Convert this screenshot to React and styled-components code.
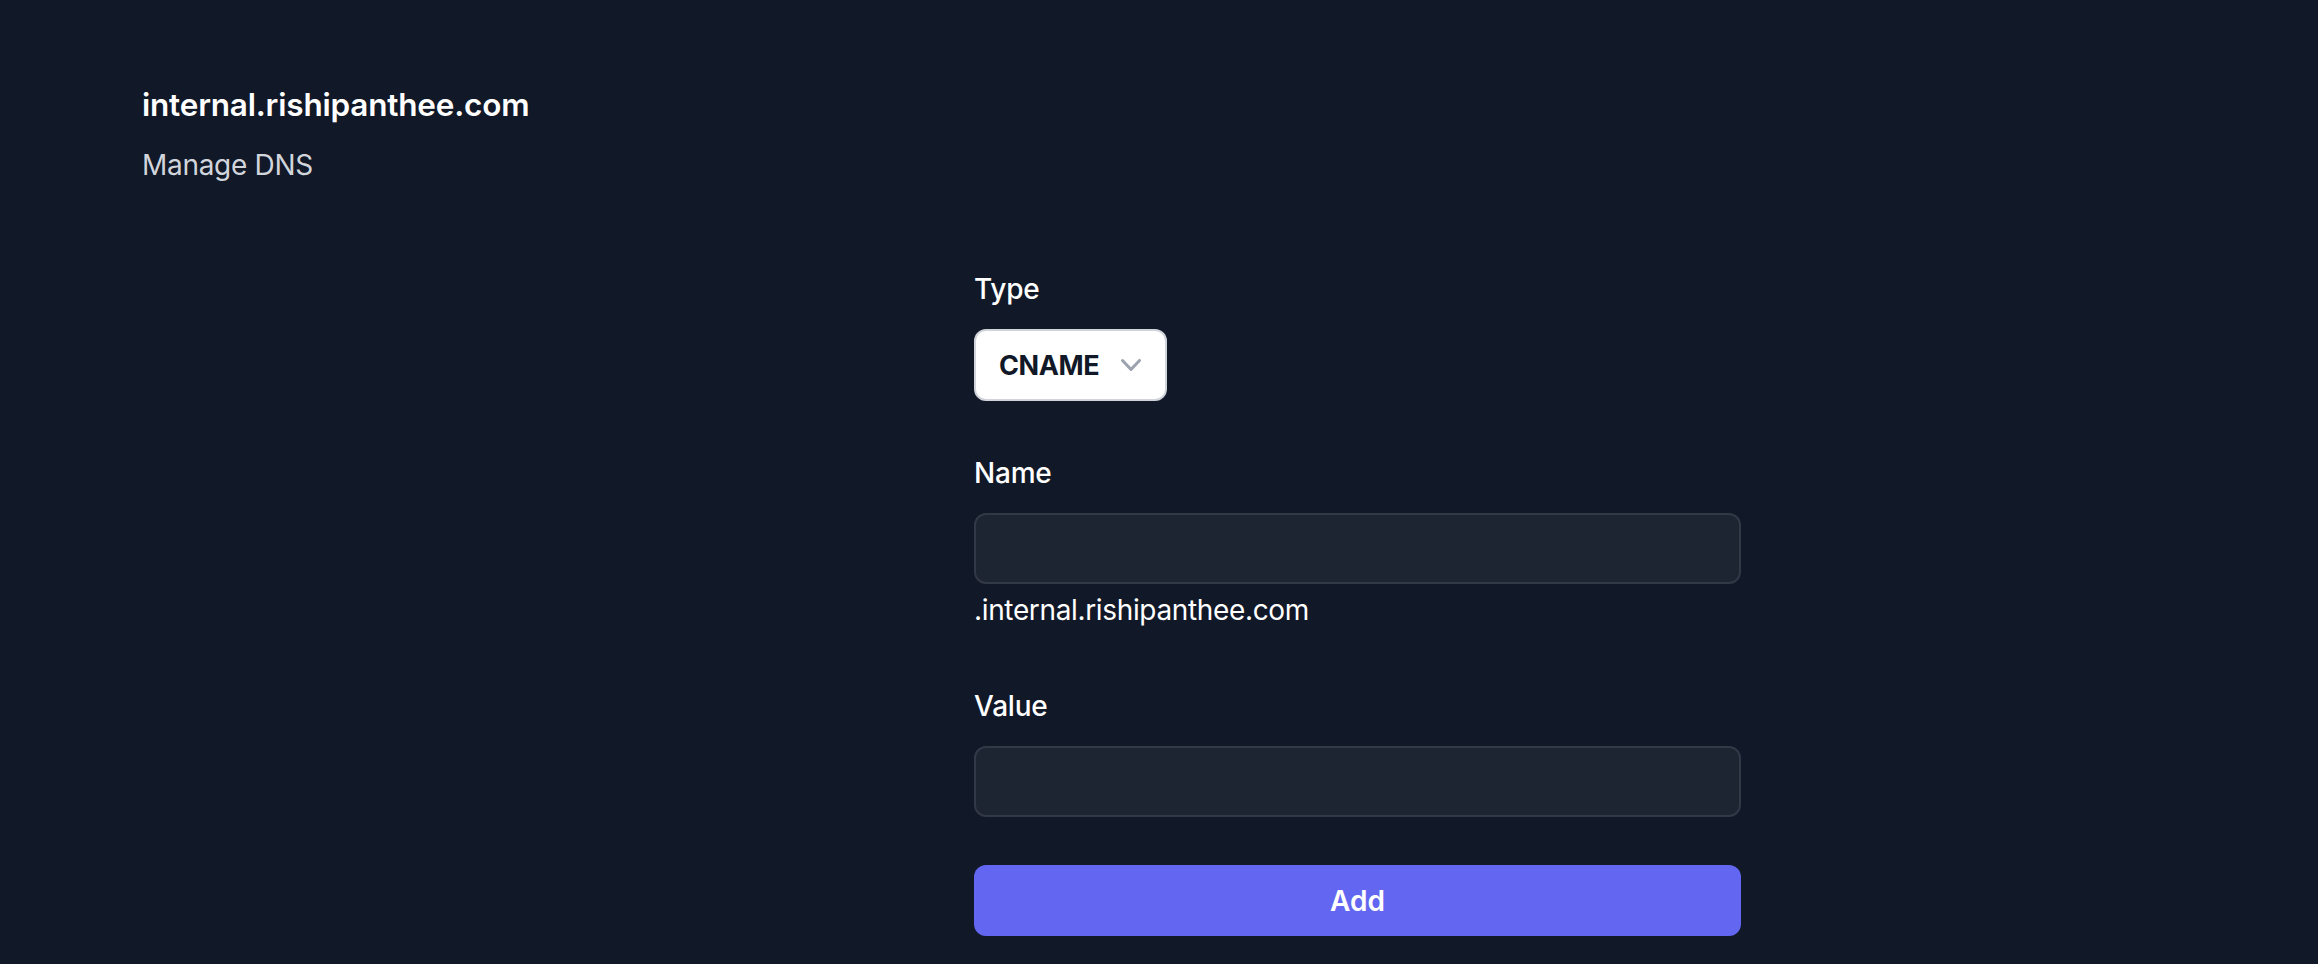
import styled, { createGlobalStyle } from 'styled-components';

const GlobalStyle = createGlobalStyle`
    html, body {
        margin: 0;
        padding: 0;
        background: #111827;
    }
    body {
        font-family: Inter, "Noto Sans", "Liberation Sans", sans-serif;
        color: #ffffff;
    }
`;

const Page = styled.div`
    min-height: 964px;
    box-sizing: border-box;
    padding: 77px 142px 0 142px;
    background: #111827;
`;

const Header = styled.header`
    display: flex;
    flex-direction: column;
    gap: 12px;
`;

const Title = styled.h1`
    margin: 0;
    font-size: 31.5px;
    line-height: 56px;
    font-weight: 600;
    letter-spacing: -0.2px;
    color: #ffffff;
`;

const Subtitle = styled.p`
    margin: 0;
    font-size: 28px;
    line-height: 40px;
    letter-spacing: -0.3px;
    color: #d1d5db;
`;

const Form = styled.form`
    display: flex;
    flex-direction: column;
    gap: 48px;
    width: 767px;
    margin: 80px 0 0 832px;
`;

const Field = styled.div`
    display: flex;
    flex-direction: column;
    align-items: flex-start;
`;

const Label = styled.label`
    font-size: 28px;
    line-height: 48px;
    font-weight: 500;
    letter-spacing: -0.2px;
    color: #ffffff;
    margin-bottom: 16px;
`;

const SelectBox = styled.div`
    display: flex;
    align-items: center;
    justify-content: space-between;
    box-sizing: border-box;
    width: 193px;
    height: 72px;
    padding: 0 14px 0 23px;
    background: #ffffff;
    border: 2px solid #d1d5db;
    border-radius: 12px;
    font-size: 27px;
    font-weight: 700;
    letter-spacing: -0.4px;
    color: #111827;
`;

const TextInput = styled.input`
    box-sizing: border-box;
    width: 100%;
    height: 71px;
    padding: 0 24px;
    background: #1d2432;
    border: 2px solid #323846;
    border-radius: 12px;
    font: inherit;
    font-size: 28px;
    color: #ffffff;
    outline: none;
`;

const Suffix = styled.span`
    font-size: 28px;
    line-height: 48px;
    letter-spacing: -0.35px;
    color: #ffffff;
    margin-top: 2px;
`;

const SubmitButton = styled.button`
    width: 100%;
    height: 71px;
    border: none;
    border-radius: 12px;
    background: #6366f1;
    color: #ffffff;
    font: inherit;
    font-size: 28px;
    font-weight: 600;
    cursor: pointer;
`;

function ChevronDown() {
    return (
        <svg width="40" height="40" viewBox="0 0 20 20" fill="#9ca3af" aria-hidden="true">
            <path
                fillRule="evenodd"
                d="M5.23 7.21a.75.75 0 011.06.02L10 11.168l3.71-3.938a.75.75 0 111.08 1.04l-4.25 4.5a.75.75 0 01-1.08 0l-4.25-4.5a.75.75 0 01.02-1.06z"
                clipRule="evenodd"
            />
        </svg>
    );
}

export default function App() {
    return (
        <>
            <GlobalStyle />
            <Page>
                <Header>
                    <Title>internal.rishipanthee.com</Title>
                    <Subtitle>Manage DNS</Subtitle>
                </Header>

                <Form onSubmit={(e) => e.preventDefault()}>
                    <Field>
                        <Label>Type</Label>
                        <SelectBox>
                            CNAME
                            <ChevronDown />
                        </SelectBox>
                    </Field>

                    <Field>
                        <Label htmlFor="name">Name</Label>
                        <TextInput id="name" type="text" />
                        <Suffix>.internal.rishipanthee.com</Suffix>
                    </Field>

                    <Field>
                        <Label htmlFor="value">Value</Label>
                        <TextInput id="value" type="text" />
                    </Field>

                    <SubmitButton type="submit">Add</SubmitButton>
                </Form>
            </Page>
        </>
    );
}
